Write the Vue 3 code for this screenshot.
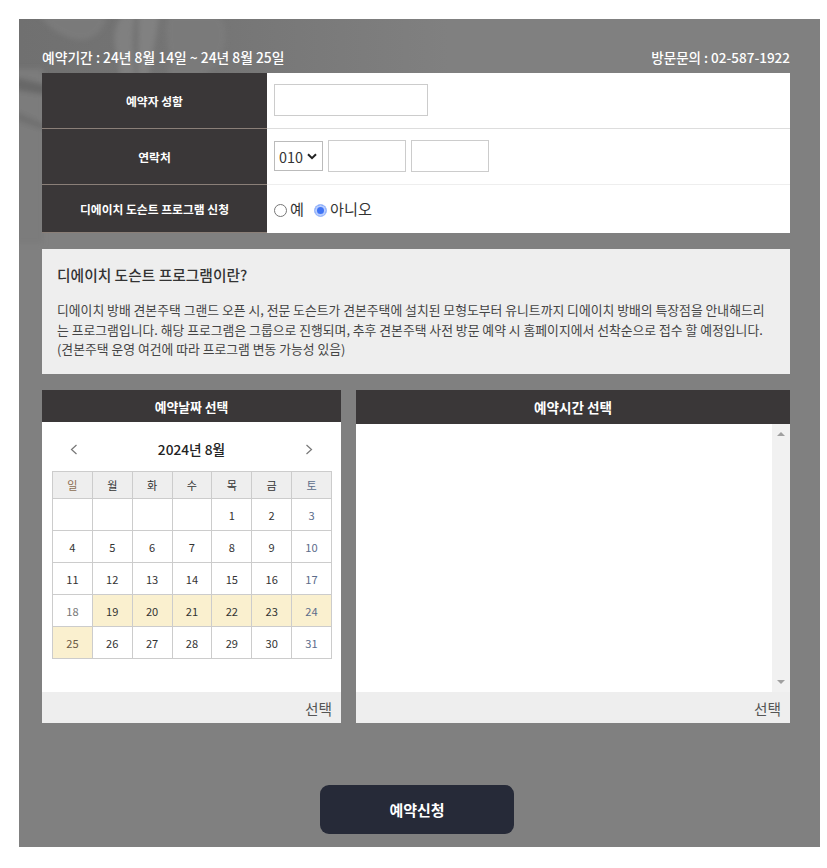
<template>
  <div class="page">
    <div class="reserve">
      <svg class="texture" viewBox="0 0 802 829" preserveAspectRatio="none" aria-hidden="true">
        <defs>
          <filter id="soft"><feGaussianBlur stdDeviation="2.5" /></filter>
          <linearGradient id="shade" x1="0" y1="0" x2="1" y2="0">
            <stop offset="0" stop-color="#707070" />
            <stop offset="0.45" stop-color="#757575" />
            <stop offset="1" stop-color="#808080" />
          </linearGradient>
        </defs>
        <rect width="430" height="56" fill="url(#shade)" />
        <g filter="url(#soft)">
          <path d="M-4 50H24V225H-4Z" fill="#7b7b7b" />
          <path d="M20 -4H88C86 14 70 24 55 20C40 16 28 8 20 -4Z" fill="#7a7a7a" />
          <path d="M103 -4H116C112 18 114 36 116 58H100C104 36 86 24 103 -4Z" fill="#808080" />
          <path d="M120 -4H140C138 18 132 36 130 58H119Z" fill="#818181" />
          <path d="M150 -4H200C214 14 206 40 184 58H148C156 40 142 18 150 -4Z" fill="#7a7a7a" />
          <path d="M-4 58L28 66V76L-4 71Z" fill="#686868" />
          <path d="M-4 92L28 106V112L-4 101Z" fill="#6f6f6f" />
        </g>
      </svg>

      <div class="inner">
        <div class="top-info">
          <span class="period">예약기간 : 24년 8월 14일 ~ 24년 8월 25일</span>
          <span class="contact">방문문의 : 02-587-1922</span>
        </div>

        <div class="form">
          <div class="form-row name-row">
            <div class="label">예약자 성함</div>
            <div class="field"><input v-model="name" class="text-input name" type="text" /></div>
          </div>
          <div class="form-row phone-row">
            <div class="label">연락처</div>
            <div class="field">
              <div class="select-box">
                <select v-model="phone.first">
                  <option>010</option>
                </select>
                <svg class="arrow" viewBox="0 0 10 7"><path d="M1 1.2L5 5.2L9 1.2" /></svg>
              </div>
              <input v-model="phone.middle" class="text-input tel" type="text" />
              <input v-model="phone.last" class="text-input tel" type="text" />
            </div>
          </div>
          <div class="form-row docent-row">
            <div class="label">디에이치 도슨트 프로그램 신청</div>
            <div class="field">
              <label class="radio"><input v-model="docent" type="radio" value="Y" />예</label>
              <label class="radio"><input v-model="docent" type="radio" value="N" />아니오</label>
            </div>
          </div>
        </div>

        <div class="notice">
          <h3>디에이치 도슨트 프로그램이란?</h3>
          <p v-for="line in notice" :key="line">{{ line }}</p>
        </div>

        <div class="pickers">
          <div class="picker date">
            <div class="picker-head">예약날짜 선택</div>
            <div class="picker-body">
              <div class="month">
                <button type="button" class="nav"><svg viewBox="0 0 8 11"><path d="M6.5 1L1.5 5.5L6.5 10" /></svg></button>
                <strong>2024년 8월</strong>
                <button type="button" class="nav"><svg viewBox="0 0 8 11"><path d="M1.5 1L6.5 5.5L1.5 10" /></svg></button>
              </div>
              <table class="calendar">
                <thead>
                  <tr>
                    <th v-for="day in weekdays" :key="day">{{ day }}</th>
                  </tr>
                </thead>
                <tbody>
                  <tr v-for="(week, index) in weeks" :key="index">
                    <td v-for="(day, i) in week" :key="i" :class="{ open: isOpen(day), past: day === 18 }">{{ day }}</td>
                  </tr>
                </tbody>
              </table>
            </div>
            <div class="picker-foot">선택</div>
          </div>

          <div class="picker time">
            <div class="picker-head">예약시간 선택</div>
            <div class="picker-body">
              <div class="scrollbar">
                <svg viewBox="0 0 8 4"><path d="M0 4L4 0L8 4Z" /></svg>
                <svg viewBox="0 0 8 4"><path d="M0 0H8L4 4Z" /></svg>
              </div>
            </div>
            <div class="picker-foot">선택</div>
          </div>
        </div>

        <button type="button" class="submit">예약신청</button>
      </div>
    </div>
  </div>
</template>

<script setup>
import { ref, reactive } from 'vue';

const name = ref('');
const phone = reactive({ first: '010', middle: '', last: '' });
const docent = ref('N');

const notice = [
  '디에이치 방배 견본주택 그랜드 오픈 시, 전문 도슨트가 견본주택에 설치된 모형도부터 유니트까지 디에이치 방배의 특장점을 안내해드리',
  '는 프로그램입니다. 해당 프로그램은 그룹으로 진행되며, 추후 견본주택 사전 방문 예약 시 홈페이지에서 선착순으로 접수 할 예정입니다.',
  '(견본주택 운영 여건에 따라 프로그램 변동 가능성 있음)'
];

const weekdays = ['일', '월', '화', '수', '목', '금', '토'];

// August 2024 starts on a Thursday
const weeks = Array.from({ length: 5 }, (_, w) =>
  Array.from({ length: 7 }, (_, d) => {
    const day = w * 7 + d - 3;
    return day > 0 ? day : '';
  })
);

const isOpen = (day) => {
  return day >= 19 && day <= 25;
}
</script>

<style>
body {
  background: #fff;
}
</style>

<style scoped>
* {
  box-sizing: border-box;
}

.page {
  height: 868px;
  padding: 18.5px 7px 0 18.5px;
  font-family: 'Noto Sans CJK KR', 'Noto Sans', sans-serif;
  color: #333;
}

.reserve {
  position: relative;
  height: 828.5px;
  background: #808080;
  overflow: hidden;
}

.texture {
  position: absolute;
  inset: 0;
  width: 100%;
  height: 100%;
}

.inner {
  position: relative;
  padding: 0 30px 0 23.5px;
}

.top-info {
  display: flex;
  justify-content: space-between;
  height: 54.5px;
  padding-top: 28px;
  line-height: 20px;
  color: #fff;
  font-weight: 500;
  white-space: nowrap;
}

.period {
  font-size: 13.8px;
}

.contact {
  font-size: 13.5px;
}

.form {
  height: 159.5px;
  background: #fff;
}

.form-row {
  display: flex;
}

.name-row {
  height: 55.5px;
}

.phone-row {
  height: 56.5px;
}

.docent-row {
  height: 47.5px;
}

.label {
  display: flex;
  align-items: center;
  justify-content: center;
  width: 225px;
  background: #3a3738;
  border-bottom: 1px solid #8a7f78;
  color: #fff;
  font-size: 11.8px;
  font-weight: 700;
}

.field {
  display: flex;
  flex: 1;
  align-items: center;
  padding-left: 7px;
  border-bottom: 1px solid #ddd;
}

.phone-row .field {
  gap: 5px;
  border-color: #eee;
}

.docent-row .field {
  gap: 10px;
  padding-bottom: 2px;
  border: 0;
}

.text-input {
  height: 32px;
  padding: 0 5px;
  background: #fff;
  border: 1px solid #ccc;
  border-radius: 0;
}

.name {
  width: 154px;
}

.tel {
  width: 78px;
}

.select-box {
  position: relative;
  width: 49px;
  height: 30px;
}

select {
  width: 100%;
  height: 100%;
  padding: 0 0 0 4px;
  appearance: none;
  background: #fff;
  border: 1px solid #bbb;
  border-radius: 0;
  color: #333;
  font-family: inherit;
  font-size: 14.4px;
}

.arrow {
  position: absolute;
  top: 12px;
  right: 6px;
  width: 10px;
  height: 7px;
  fill: none;
  stroke: #222;
  stroke-width: 2;
}

.radio {
  display: flex;
  align-items: center;
  gap: 3px;
  font-size: 15.2px;
  line-height: 20px;
}

.radio input {
  width: 13px;
  height: 13px;
  margin: 5px 0 0;
  appearance: none;
  background: #fff;
  border: 1px solid #777;
  border-radius: 50%;
}

.radio input:checked {
  background: #3f74f5;
  border: 1px solid #a4bffc;
  box-shadow: inset 0 0 0 2px #b9cdfc;
}

.notice {
  height: 125px;
  margin-top: 16.5px;
  padding: 16px 15px 0;
  background: #eee;
}

.notice h3 {
  margin: 0 0 15px;
  color: #333;
  font-size: 14.75px;
  font-weight: 500;
  line-height: 20px;
}

.notice p {
  margin: 0;
  color: #444;
  font-size: 12.83px;
  line-height: 19.5px;
  white-space: nowrap;
}

.pickers {
  display: flex;
  gap: 15px;
  margin-top: 16px;
}

.picker {
  display: flex;
  flex-direction: column;
  height: 333px;
  background: #fff;
}

.date {
  width: 299px;
}

.time {
  flex: 1;
}

.picker-head {
  height: 32px;
  background: #3a3738;
  color: #fff;
  font-size: 12.8px;
  font-weight: 700;
  line-height: 33px;
  text-align: center;
}

.time .picker-head {
  height: 34px;
  font-size: 13.6px;
  line-height: 34px;
}

.picker-body {
  flex: 1;
}

.date .picker-body {
  padding: 0 10px;
}

.month {
  display: flex;
  align-items: center;
  justify-content: space-between;
  height: 48.5px;
  padding: 6px 16px 0;
}

.month strong {
  color: #222;
  font-size: 13.7px;
  font-weight: 500;
}

.nav {
  width: 12px;
  height: 14px;
  padding: 0;
  background: none;
  border: 0;
  line-height: 0;
}

.nav svg {
  width: 8px;
  height: 11px;
  fill: none;
  stroke: #777;
  stroke-width: 1.2;
}

.calendar {
  width: 280px;
  border-collapse: collapse;
  table-layout: fixed;
}

.calendar th,
.calendar td {
  padding: 1px 0 0;
  border: 1px solid #ccc;
  color: #333;
  font-size: 11.1px;
  line-height: 16px;
  text-align: center;
}

.calendar th {
  height: 27.5px;
  background: #eee;
  font-weight: 400;
}

.calendar td {
  height: 32px;
}

.calendar th:first-child {
  color: #8c6d52;
}

.calendar th:last-child,
.calendar td:last-child {
  color: #5c6d8b;
}

.calendar .open {
  background: #faf0cf;
}

.calendar .past {
  color: #777;
}

.calendar td.open:first-child {
  color: #6b5a45;
}

.picker-foot {
  height: 31px;
  padding-right: 9px;
  background: #eee;
  color: #555;
  font-size: 14.7px;
  line-height: 33px;
  text-align: right;
}

.time .picker-body {
  display: flex;
  justify-content: flex-end;
}

.scrollbar {
  display: flex;
  flex-direction: column;
  align-items: center;
  justify-content: space-between;
  width: 18px;
  padding: 8px 0;
  background: #f1f1f1;
}

.scrollbar svg {
  width: 8px;
  height: 4px;
  fill: #a0a0a0;
}

.submit {
  display: block;
  width: 194px;
  height: 49px;
  margin: 62px 0 0 278px;
  padding: 0;
  background: #262a38;
  border: 0;
  border-radius: 9px;
  color: #fff;
  font-family: inherit;
  font-size: 15px;
  font-weight: 700;
}
</style>
